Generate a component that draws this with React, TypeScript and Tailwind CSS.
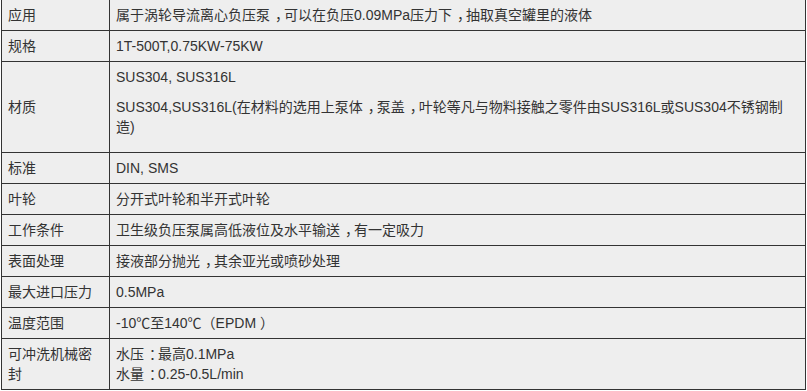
import type { ReactNode } from 'react';

// the reference centres full-width punctuation in its em box; nudge the SC glyphs right
// (padding + negative tracking keeps the advance at 14px)
const shift: Record<string, string> = {
  '，': 'pl-[5px] tracking-[-5px]',
  '：': 'pl-[5px] tracking-[-5px]',
  '）': 'pl-[4px] tracking-[-4px]',
};

const P = ({ text }: { text: string }) => (
  <>
    {text
      .split(/([，：）|])/)
      .filter((part) => part !== '|' && part !== '')
      .map((part, i) =>
        shift[part] ? (
          <span key={i} className={shift[part]}>
            {part}
          </span>
        ) : (
          <span key={i}>{part}</span>
        )
      )}
  </>
);

const rows: { label: string; content: ReactNode }[] = [
  { label: '应用', content: <P text="属于涡轮导流离心负压泵，可以在负压0.09MPa压力下，抽取真空罐里的液体" /> },
  { label: '规格', content: '1T-500T,0.75KW-75KW' },
  {
    label: '材质',
    content: (
      <>
        <p className="mb-[10px]">SUS304, SUS316L</p>
        <p className="mb-[10px]">
          <P text="SUS304,SUS316L(在材料的选用上泵体，泵盖，叶轮等凡与物料接触之零件由SUS316L或SUS304不锈钢制|造)" />
        </p>
      </>
    ),
  },
  { label: '标准', content: 'DIN, SMS' },
  { label: '叶轮', content: '分开式叶轮和半开式叶轮' },
  { label: '工作条件', content: <P text="卫生级负压泵属高低液位及水平输送，有一定吸力" /> },
  { label: '表面处理', content: <P text="接液部分抛光，其余亚光或喷砂处理" /> },
  { label: '最大进口压力', content: '0.5MPa' },
  { label: '温度范围', content: <P text="-10℃至140℃（EPDM）" /> },
  {
    label: '可冲洗机械密封',
    content: (
      <>
        <P text="水压：最高0.1MPa" />
        <br />
        <P text="水量：0.25-0.5L/min" />
      </>
    ),
  },
];

export default function App() {
  return (
    <div className="w-[807px] h-[391px] bg-white pl-px overflow-hidden">
      <table
        className="w-[805px] border-collapse bg-[#eeeeee] text-[14px] leading-[20px] text-[#333333]"
        style={{ fontFamily: '"Liberation Sans", "Noto Sans CJK SC", sans-serif' }}
      >
        <tbody>
          {rows.map((r, i) => (
            <tr key={r.label}>
              <td
                className={`w-[108px] border border-[#333333] px-[6px] py-[5px] align-middle ${i === 0 ? 'border-t-0' : ''}`}
              >
                {r.label}
              </td>
              <td
                className={`border border-[#333333] px-[6px] py-[5px] align-middle ${i === 0 ? 'border-t-0' : ''}`}
              >
                {r.content}
              </td>
            </tr>
          ))}
        </tbody>
      </table>
    </div>
  );
}
